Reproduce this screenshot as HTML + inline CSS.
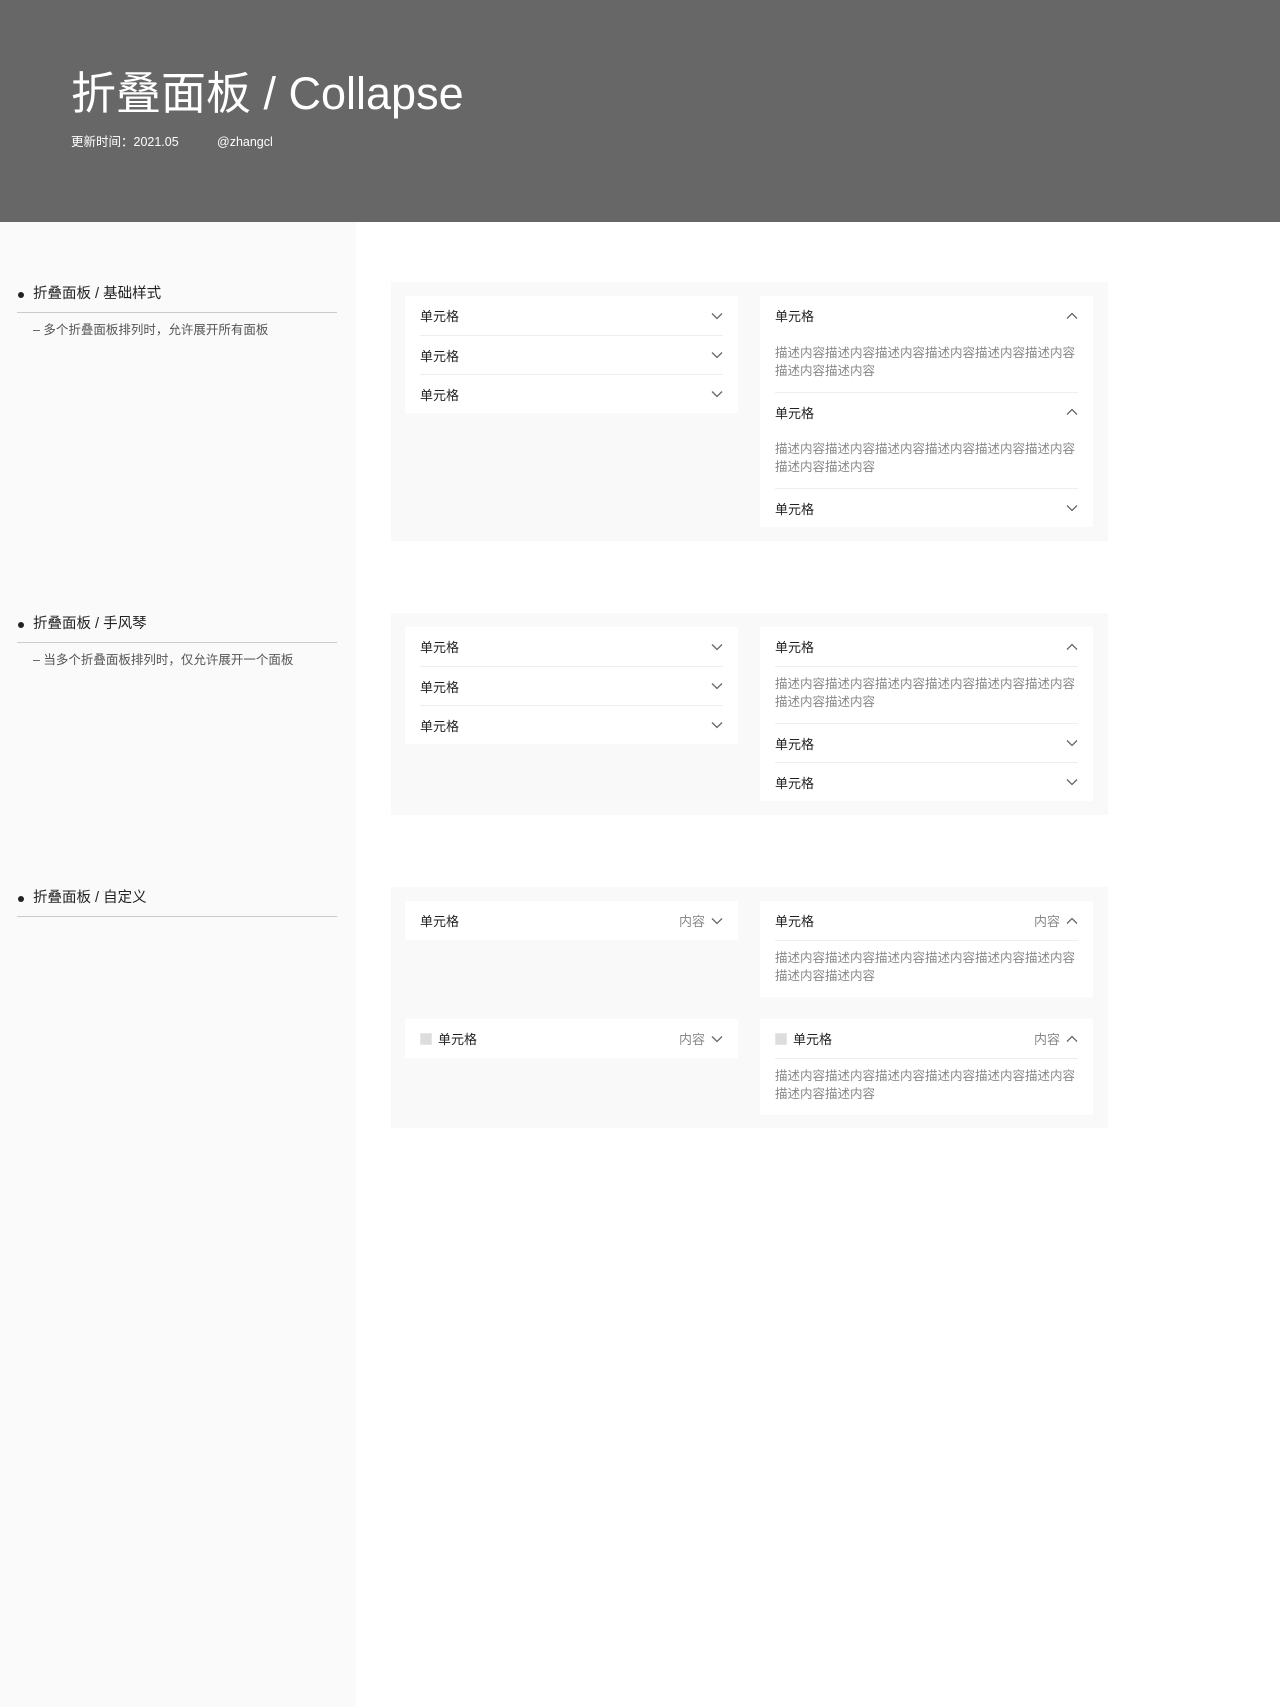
<!DOCTYPE html>
<html><head><meta charset="utf-8"><style>
*{margin:0;padding:0;box-sizing:border-box}
body{width:1280px;height:1707px;position:relative;background:#fff;font-family:"Liberation Sans","Noto Sans CJK SC",sans-serif;overflow:hidden}
.hdr{position:absolute;left:0;top:0;width:1280px;height:222px;background:#676767;color:#fff}
.hdr h1{position:absolute;left:71px;top:66px;font-size:45px;font-weight:normal;line-height:56px;white-space:nowrap}
.hdr .s{position:absolute;top:134px;font-size:12.5px;line-height:17px}
.side{position:absolute;left:0;top:222px;width:356px;height:1485px;background:#fafafa}
.sec{position:absolute;left:17px;width:320px}
.sec .t{position:relative;font-size:14.5px;color:#222;padding-left:16px;line-height:20px;height:29px;border-bottom:1px solid #ccc}
.sec .t:before{content:"";position:absolute;left:1px;top:8px;width:6px;height:6px;border-radius:50%;background:#222}
.sec .d{font-size:12.5px;color:#555;padding-left:16px;margin-top:9px;line-height:16px}
.panel{position:absolute;left:391px;width:717px;background:#f9f9f9;padding:14px 15px 14px 14px;display:flex;gap:22px;align-items:flex-start}
.card{background:#fff;width:333px;padding:0 15px}
.row{height:39px;display:flex;align-items:center;font-size:13px;color:#222;border-top:1px solid #eee}
.row.f{border-top:none}
.row .n{flex:1}
.row .c{color:#888;margin-right:6px}
.desc{font-size:12.5px;color:#888;line-height:17.5px;padding:9px 0 12px}
.ic{display:inline-block;width:12px;height:12px;background:#ddd;margin-right:6px;border:1px solid #e6e6e6}
svg{display:block}
</style></head><body>
<div class="hdr"><h1>折叠面板 / Collapse</h1><div class="s" style="left:71px">更新时间：2021.05</div><div class="s" style="left:217px">@zhangcl</div></div>
<div class="side"></div>

<div class="sec" style="top:284px"><div class="t">折叠面板 / 基础样式</div><div class="d">– 多个折叠面板排列时，允许展开所有面板</div></div>
<div class="sec" style="top:614px"><div class="t">折叠面板 / 手风琴</div><div class="d">– 当多个折叠面板排列时，仅允许展开一个面板</div></div>
<div class="sec" style="top:888px"><div class="t">折叠面板 / 自定义</div></div>

<svg width="0" height="0" style="position:absolute"><defs>
<symbol id="dn" viewBox="0 0 12 8"><path d="M1 1.5L6 6.5L11 1.5" fill="none" stroke="#666" stroke-width="1.3"/></symbol>
<symbol id="up" viewBox="0 0 12 8"><path d="M1 6.5L6 1.5L11 6.5" fill="none" stroke="#666" stroke-width="1.3"/></symbol>
</defs></svg>

<div class="panel" style="top:282px;height:259px">
<div class="card">
<div class="row f"><span class="n">单元格</span><svg width="12" height="8"><use href="#dn"/></svg></div>
<div class="row"><span class="n">单元格</span><svg width="12" height="8"><use href="#dn"/></svg></div>
<div class="row"><span class="n">单元格</span><svg width="12" height="8"><use href="#dn"/></svg></div>
</div>
<div class="card">
<div class="row f"><span class="n">单元格</span><svg width="12" height="8"><use href="#up"/></svg></div>
<div class="desc" style="padding-top:10px">描述内容描述内容描述内容描述内容描述内容描述内容描述内容描述内容</div>
<div class="row"><span class="n">单元格</span><svg width="12" height="8"><use href="#up"/></svg></div>
<div class="desc" style="padding-top:10px">描述内容描述内容描述内容描述内容描述内容描述内容描述内容描述内容</div>
<div class="row"><span class="n">单元格</span><svg width="12" height="8"><use href="#dn"/></svg></div>
</div>
</div>

<div class="panel" style="top:613px;height:202px">
<div class="card">
<div class="row f"><span class="n">单元格</span><svg width="12" height="8"><use href="#dn"/></svg></div>
<div class="row"><span class="n">单元格</span><svg width="12" height="8"><use href="#dn"/></svg></div>
<div class="row"><span class="n">单元格</span><svg width="12" height="8"><use href="#dn"/></svg></div>
</div>
<div class="card">
<div class="row f"><span class="n">单元格</span><svg width="12" height="8"><use href="#up"/></svg></div>
<div class="row" style="height:auto;display:block"><div class="desc">描述内容描述内容描述内容描述内容描述内容描述内容描述内容描述内容</div></div>
<div class="row"><span class="n">单元格</span><svg width="12" height="8"><use href="#dn"/></svg></div>
<div class="row"><span class="n">单元格</span><svg width="12" height="8"><use href="#dn"/></svg></div>
</div>
</div>

<div class="panel" style="top:887px;height:241px;flex-wrap:wrap;row-gap:22px">
<div class="card">
<div class="row f"><span class="n">单元格</span><span class="c">内容</span><svg width="12" height="8"><use href="#dn"/></svg></div>
</div>
<div class="card">
<div class="row f"><span class="n">单元格</span><span class="c">内容</span><svg width="12" height="8"><use href="#up"/></svg></div>
<div class="row" style="height:auto;display:block"><div class="desc">描述内容描述内容描述内容描述内容描述内容描述内容描述内容描述内容</div></div>
</div>
<div class="card">
<div class="row f"><span class="ic"></span><span class="n">单元格</span><span class="c">内容</span><svg width="12" height="8"><use href="#dn"/></svg></div>
</div>
<div class="card">
<div class="row f"><span class="ic"></span><span class="n">单元格</span><span class="c">内容</span><svg width="12" height="8"><use href="#up"/></svg></div>
<div class="row" style="height:auto;display:block"><div class="desc">描述内容描述内容描述内容描述内容描述内容描述内容描述内容描述内容</div></div>
</div>
</div>
</body></html>
